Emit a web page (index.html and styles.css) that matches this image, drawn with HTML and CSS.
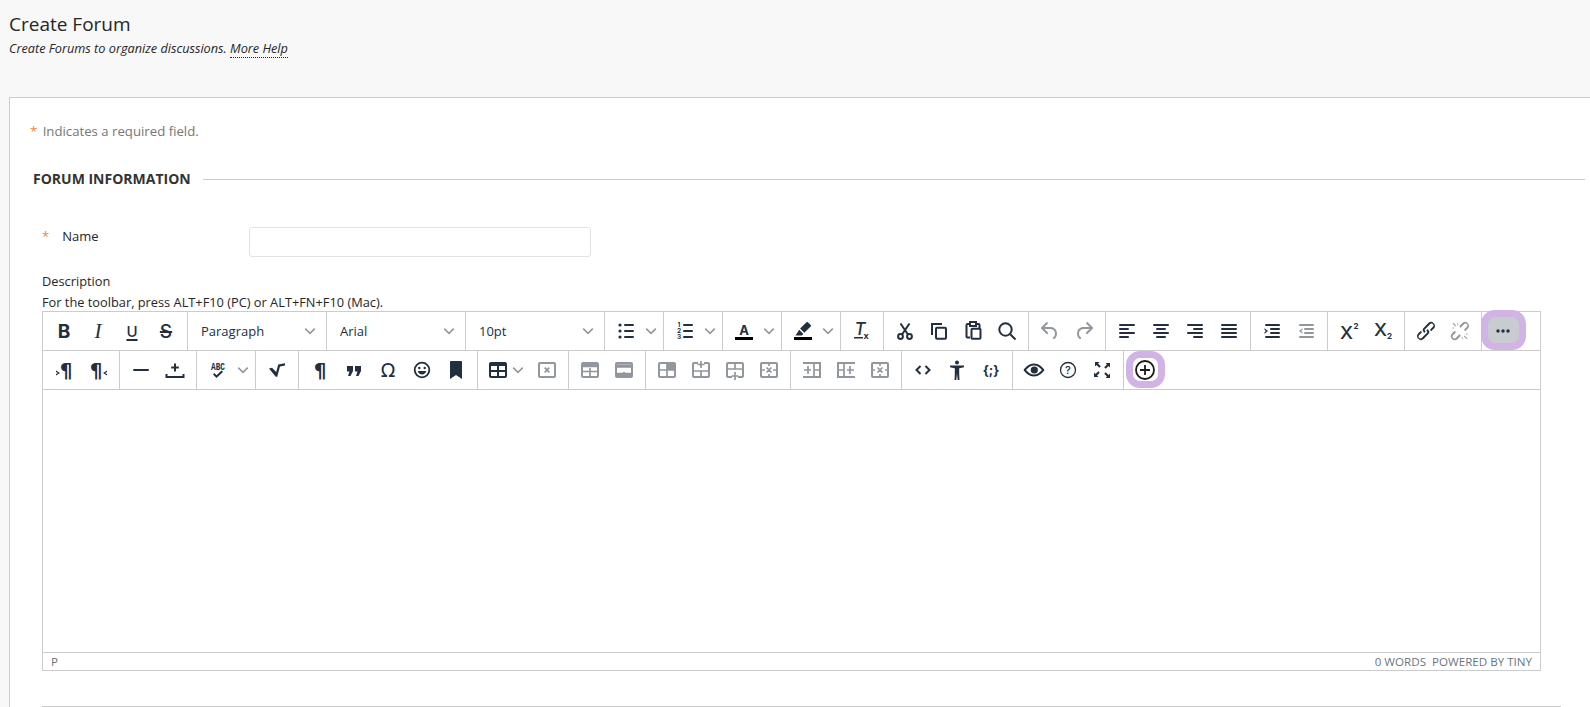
FILE: index.html
```html
<!DOCTYPE html>
<html lang="en">
  <head>
    <meta charset="UTF-8" />
    <title>Create Forum</title>
    <link rel="stylesheet" href="styles.css">
  </head>
  <body>
    <div class="page-header">
      <h1>Create Forum</h1>
      <p class="page-help">Create Forums to organize discussions. <a class="more-help">More Help</a></p>
    </div>

    <div class="panel">
      <p class="required-note"><span class="star star-note">*</span> Indicates a required field.</p>

      <div class="section-title">
        <h2>FORUM INFORMATION</h2>
        <div class="section-line"></div>
      </div>

      <div class="field-row">
        <div class="field-label"><span class="star">*</span><label>Name</label></div>
        <input class="text-input" type="text" />
      </div>

      <div class="desc-label">Description</div>
      <div class="desc-hint">For the toolbar, press ALT+F10 (PC) or ALT+FN+F10 (Mac).</div>

      <div class="editor">
        <div class="tb-row">
          <div class="tb-group">
            <button class="tbtn"><span class="g g-b">B</span></button>
            <button class="tbtn"><span class="g g-i">I</span></button>
            <button class="tbtn"><span class="g g-u">U</span></button>
            <button class="tbtn"><span class="g g-s">S</span></button>
          </div>
          <div class="tb-group"><button class="tsel"><span>Paragraph</span><svg class="chev" viewBox="0 0 10 10"><path d="M1 3l4 4 4-4"/></svg></button></div>
          <div class="tb-group"><button class="tsel"><span>Arial</span><svg class="chev" viewBox="0 0 10 10"><path d="M1 3l4 4 4-4"/></svg></button></div>
          <div class="tb-group"><button class="tsel"><span>10pt</span><svg class="chev" viewBox="0 0 10 10"><path d="M1 3l4 4 4-4"/></svg></button></div>
          <div class="tb-group">
            <button class="tbtn"><svg class="ico" viewBox="0 0 24 24"><rect x="10" y="5" width="10" height="2" rx="1"/><rect x="10" y="11" width="10" height="2" rx="1"/><rect x="10" y="17" width="10" height="2" rx="1"/><circle cx="6" cy="6" r="1.6"/><circle cx="6" cy="12" r="1.6"/><circle cx="6" cy="18" r="1.6"/></svg></button>
            <span class="tchev"><svg class="chev" viewBox="0 0 10 10"><path d="M1 3l4 4 4-4"/></svg></span>
          </div>
          <div class="tb-group">
            <button class="tbtn"><svg class="ico" viewBox="0 0 24 24"><rect x="10" y="5" width="10" height="2" rx="1"/><rect x="10" y="11" width="10" height="2" rx="1"/><rect x="10" y="17" width="10" height="2" rx="1"/><text class="nums" x="6" y="8">1</text><text class="nums" x="6" y="14">2</text><text class="nums" x="6" y="20">3</text></svg></button>
            <span class="tchev"><svg class="chev" viewBox="0 0 10 10"><path d="M1 3l4 4 4-4"/></svg></span>
          </div>
          <div class="tb-group">
            <button class="tbtn"><svg class="ico" viewBox="0 0 24 24"><text class="ltr-a" x="12" y="15.5">A</text><rect class="swatch" x="3" y="18" width="18" height="3"/></svg></button>
            <span class="tchev"><svg class="chev" viewBox="0 0 10 10"><path d="M1 3l4 4 4-4"/></svg></span>
          </div>
          <div class="tb-group">
            <button class="tbtn"><svg class="ico" viewBox="0 0 24 24"><path d="M16.9 3.3l2.8 2.8a1 1 0 0 1 0 1.4l-6.4 6.3-4.2-4.2 6.4-6.3a1 1 0 0 1 1.4 0zM8.2 10.7l4.2 4.2-1.500 1.600H4.500z"/><rect class="swatch" x="3" y="18" width="18" height="3"/></svg></button>
            <span class="tchev"><svg class="chev" viewBox="0 0 10 10"><path d="M1 3l4 4 4-4"/></svg></span>
          </div>
          <div class="tb-group">
            <button class="tbtn"><svg class="ico" viewBox="0 0 24 24"><text class="ltr-t" x="4.500" y="16">T</text><text class="ltr-x" x="16" y="19.500">x</text><rect x="4" y="18" width="9" height="1.500"/></svg></button>
          </div>
          <div class="tb-group">
            <button class="tbtn"><svg class="ico ln" viewBox="0 0 24 24"><circle cx="7.500" cy="17.500" r="2.400"/><circle cx="16.500" cy="17.500" r="2.400"/><path d="M9 15.500L16.500 4.500M15 15.500L7.500 4.500"/></svg></button>
            <button class="tbtn"><svg class="ico ln" viewBox="0 0 24 24"><path d="M5 16V5h10"/><rect x="9" y="8.700" width="10" height="11" rx="1"/></svg></button>
            <button class="tbtn"><svg class="ico ln" viewBox="0 0 24 24"><path d="M9 18.500H6.500a1 1 0 0 1-1-1V6a1 1 0 0 1 1-1H9M15 5h2.500a1 1 0 0 1 1 1v3"/><rect x="9" y="3" width="6" height="4"/><rect x="10.500" y="9.700" width="9" height="10" rx="1"/></svg></button>
            <button class="tbtn"><svg class="ico ln" viewBox="0 0 24 24"><circle cx="10.500" cy="10.500" r="6.200"/><path d="M15 15l5.500 5.500"/></svg></button>
          </div>
          <div class="tb-group">
            <button class="tbtn off"><svg class="ico" viewBox="0 0 24 24"><path d="M6.4 8H12c3.7 0 6.2 2 6.8 5.1.6 2.7-.4 5.6-2.3 6.8a1 1 0 0 1-1-1.8c1.1-.6 1.8-2.7 1.4-4.6-.5-2.1-2.1-3.5-4.9-3.5H6.4l3.3 3.3a1 1 0 1 1-1.4 1.4l-5-5a1 1 0 0 1 0-1.4l5-5a1 1 0 0 1 1.4 1.4L6.4 8z"/></svg></button>
            <button class="tbtn off"><svg class="ico flip" viewBox="0 0 24 24"><path d="M6.4 8H12c3.7 0 6.2 2 6.8 5.1.6 2.7-.4 5.6-2.3 6.8a1 1 0 0 1-1-1.8c1.1-.6 1.8-2.7 1.4-4.6-.5-2.1-2.1-3.5-4.9-3.5H6.4l3.3 3.3a1 1 0 1 1-1.4 1.4l-5-5a1 1 0 0 1 0-1.4l5-5a1 1 0 0 1 1.4 1.4L6.4 8z"/></svg></button>
          </div>
          <div class="tb-group">
            <button class="tbtn"><svg class="ico" viewBox="0 0 24 24"><rect x="4" y="5" width="16" height="2" rx="1"/><rect x="4" y="9" width="10" height="2" rx="1"/><rect x="4" y="13" width="16" height="2" rx="1"/><rect x="4" y="17" width="10" height="2" rx="1"/></svg></button>
            <button class="tbtn"><svg class="ico" viewBox="0 0 24 24"><rect x="4" y="5" width="16" height="2" rx="1"/><rect x="7" y="9" width="10" height="2" rx="1"/><rect x="4" y="13" width="16" height="2" rx="1"/><rect x="7" y="17" width="10" height="2" rx="1"/></svg></button>
            <button class="tbtn"><svg class="ico" viewBox="0 0 24 24"><rect x="4" y="5" width="16" height="2" rx="1"/><rect x="10" y="9" width="10" height="2" rx="1"/><rect x="4" y="13" width="16" height="2" rx="1"/><rect x="10" y="17" width="10" height="2" rx="1"/></svg></button>
            <button class="tbtn"><svg class="ico" viewBox="0 0 24 24"><rect x="4" y="5" width="16" height="2" rx="1"/><rect x="4" y="9" width="16" height="2" rx="1"/><rect x="4" y="13" width="16" height="2" rx="1"/><rect x="4" y="17" width="16" height="2" rx="1"/></svg></button>
          </div>
          <div class="tb-group">
            <button class="tbtn"><svg class="ico" viewBox="0 0 24 24"><rect x="5" y="5" width="15" height="2" rx="1"/><rect x="10" y="9" width="10" height="2" rx="1"/><rect x="10" y="13" width="10" height="2" rx="1"/><rect x="5" y="17" width="15" height="2" rx="1"/><path d="M4.500 9.200L8 12l-3.500 2.800V13.200L6 12 4.500 10.800z"/></svg></button>
            <button class="tbtn off"><svg class="ico" viewBox="0 0 24 24"><rect x="5" y="5" width="15" height="2" rx="1"/><rect x="10" y="9" width="10" height="2" rx="1"/><rect x="10" y="13" width="10" height="2" rx="1"/><rect x="5" y="17" width="15" height="2" rx="1"/><path d="M8.500 9.200L5 12l3.500 2.800V13.200L7 12l1.500-1.200z"/></svg></button>
          </div>
          <div class="tb-group">
            <button class="tbtn"><svg class="ico" viewBox="0 0 24 24"><text class="ltr-big" x="9.500" y="20" textLength="13" lengthAdjust="spacingAndGlyphs">X</text><text class="ltr-small" x="19" y="9.500">2</text></svg></button>
            <button class="tbtn"><svg class="ico" viewBox="0 0 24 24"><text class="ltr-big" x="9.500" y="16.500" textLength="13" lengthAdjust="spacingAndGlyphs">X</text><text class="ltr-small" x="18.500" y="20">2</text></svg></button>
          </div>
          <div class="tb-group">
            <button class="tbtn"><svg class="ico" viewBox="0 0 24 24"><path d="M6.2 12.3a1 1 0 0 1 1.4 1.4l-2 2a2 2 0 1 0 2.6 2.8l4.8-4.8a1 1 0 0 0 0-1.4 1 1 0 1 1 1.4-1.3 2.9 2.9 0 0 1 0 4L9.6 20a3.9 3.9 0 0 1-5.5-5.5l2-2zm11.6-.6a1 1 0 0 1-1.4-1.4l2-2a2 2 0 1 0-2.6-2.8L11 10.3a1 1 0 0 0 0 1.4 1 1 0 1 1-1.4 1.3 2.9 2.9 0 0 1 0-4L14.4 4a3.9 3.9 0 0 1 5.5 5.5l-2 2z"/></svg></button>
            <button class="tbtn off"><svg class="ico" viewBox="0 0 24 24"><path d="M6.2 12.3a1 1 0 0 1 1.4 1.4l-2 2a2 2 0 1 0 2.6 2.8l3.2-3.2 1.4 1.4-3.2 3.3a3.9 3.9 0 0 1-5.500-5.700l2-2zm11.600-.6a1 1 0 0 1-1.400-1.400l2-2a2 2 0 1 0-2.600-2.800l-3.200 3.200-1.400-1.400L14.400 4a3.900 3.900 0 0 1 5.500 5.500l-2 2z"/><path d="M3 9l3 .6.2-1zM9 3l.6 3 1-.2zM21 15l-3-.6-.2 1zM15 21l-.6-3-1 .2zM4.500 4.500l3 3 .7-.7-3-3zM19.500 19.500l-3-3-.7.7 3 3z"/></svg></button>
          </div>
          <div class="tb-group">
            <button class="tbtn btn-active ring-more"><svg class="ico" viewBox="0 0 24 24"><circle cx="7" cy="12" r="1.700"/><circle cx="12" cy="12" r="1.700"/><circle cx="17" cy="12" r="1.700"/></svg></button>
          </div>
        </div>

        <div class="tb-row">
          <div class="tb-group">
            <button class="tbtn"><svg class="ico" viewBox="0 0 24 24"><path d="M4 12.500L8 15l-4 2.500V16l2-1-2-1z"/><text class="pilcrow" x="14" y="19">¶</text></svg></button>
            <button class="tbtn"><svg class="ico" viewBox="0 0 24 24"><text class="pilcrow" x="10" y="19">¶</text><path d="M21 12.500L17 15l4 2.500V16l-2-1 2-1z"/></svg></button>
          </div>
          <div class="tb-group">
            <button class="tbtn"><svg class="ico" viewBox="0 0 24 24"><rect x="4" y="11" width="16" height="2" rx="1"/></svg></button>
            <button class="tbtn"><svg class="ico ln" viewBox="0 0 24 24"><path d="M12 5.500v8M8.200 9.500h7.600M3.500 16v3h17v-3"/></svg></button>
          </div>
          <div class="tb-group">
            <button class="tbtn"><svg class="ico" viewBox="0 0 24 24"><text class="ltr-abc" x="12" y="12" textLength="14" lengthAdjust="spacingAndGlyphs">ABC</text><path d="M7 16.500l1.400-1.400 2.100 2.100 5.100-4.700 1.400 1.400-6.500 6z"/></svg></button>
            <span class="tchev"><svg class="chev" viewBox="0 0 10 10"><path d="M1 3l4 4 4-4"/></svg></span>
          </div>
          <div class="tb-group">
            <button class="tbtn"><svg class="ico" viewBox="0 0 24 24"><path d="M4 10.500l3-.8 4.200 4.300 2-7.500 6.800-1.200v2.200l-5 .9-2.800 10.300h-1.500z"/></svg></button>
          </div>
          <div class="tb-group">
            <button class="tbtn"><svg class="ico" viewBox="0 0 24 24"><text class="pilcrow" x="12" y="19">¶</text></svg></button>
            <button class="tbtn"><svg class="ico" viewBox="0 0 24 24"><path d="M5 8h6v5l-2.500 5H6l1.500-4.500H5zM13 8h6v5l-2.500 5H14l1.500-4.500H13z"/></svg></button>
            <button class="tbtn"><span class="g g-omega">Ω</span></button>
            <button class="tbtn"><svg class="ico" viewBox="0 0 24 24"><circle class="ln-el" cx="12" cy="12" r="7.300"/><circle cx="9.300" cy="10" r="1.200"/><circle cx="14.700" cy="10" r="1.200"/><path d="M7.800 13h8.400c-.4 2.200-2 3.600-4.200 3.600S8.200 15.200 7.800 13z"/></svg></button>
            <button class="tbtn"><svg class="ico" viewBox="0 0 24 24"><path d="M6 4a1 1 0 0 1 1-1h10a1 1 0 0 1 1 1v17l-6-4-6 4z"/></svg></button>
          </div>
          <div class="tb-group">
            <button class="tbtn tbl-menu"><svg class="ico" viewBox="0 0 24 24"><path d="M19 4a2 2 0 0 1 2 2v12a2 2 0 0 1-2 2H5a2 2 0 0 1-2-2V6c0-1.100.9-2 2-2h14zM5 14v4h6v-4H5zm14 0h-6v4h6v-4zm0-6h-6v4h6V8zM5 12h6V8H5v4z"/></svg><svg class="chev" viewBox="0 0 10 10"><path d="M1 3l4 4 4-4"/></svg></button>
            <button class="tbtn off"><svg class="ico ln" viewBox="0 0 24 24"><rect x="4" y="5" width="16" height="14" rx="1"/><path class="thin" d="M9.700 9.700l4.600 4.600M14.300 9.700l-4.600 4.600"/></svg></button>
          </div>
          <div class="tb-group">
            <button class="tbtn off"><svg class="ico ln" viewBox="0 0 24 24"><rect x="4" y="5" width="16" height="14" rx="1"/><path class="thin" d="M12 10v9M4 13.500h16"/><path class="bar" d="M4 7.500h16"/></svg></button>
            <button class="tbtn off"><svg class="ico ln" viewBox="0 0 24 24"><rect x="4" y="5" width="16" height="14" rx="1"/><path class="bar" d="M4 8h16M4 16.500h16"/><path class="thin" d="M12 14v4"/></svg></button>
          </div>
          <div class="tb-group">
            <button class="tbtn off"><svg class="ico ln" viewBox="0 0 24 24"><rect x="4" y="5" width="16" height="14" rx="1"/><path class="thin" d="M12 5v14M4 12h16"/><rect class="fill-el" x="12" y="5" width="8" height="7"/></svg></button>
            <button class="tbtn off"><svg class="ico ln" viewBox="0 0 24 24"><path d="M9 5H5a1 1 0 0 0-1 1v12a1 1 0 0 0 1 1h14a1 1 0 0 0 1-1V6a1 1 0 0 0-1-1h-4"/><path class="thin" d="M4 13h16M12 13v6M12 3v7M8.500 6.500h7"/></svg></button>
            <button class="tbtn off"><svg class="ico ln" viewBox="0 0 24 24"><path d="M9 19H5a1 1 0 0 1-1-1V6a1 1 0 0 1 1-1h14a1 1 0 0 1 1 1v12a1 1 0 0 1-1 1h-4"/><path class="thin" d="M4 11h16M12 5v6M12 14v8M8.500 18h7"/></svg></button>
            <button class="tbtn off"><svg class="ico ln" viewBox="0 0 24 24"><path d="M9 5H5a1 1 0 0 0-1 1v12a1 1 0 0 0 1 1h14a1 1 0 0 0 1-1V6a1 1 0 0 0-1-1z"/><path class="thin" d="M9.500 9.500l5 5M14.500 9.500l-5 5M4 12h4M16 12h4M12 5v3M12 16v3"/></svg></button>
          </div>
          <div class="tb-group">
            <button class="tbtn off"><svg class="ico ln" viewBox="0 0 24 24"><path d="M4 6V5h16v14H4v-1"/><path class="thin" d="M14 5v14M14 12h6M8 8v8M4 12h7"/></svg></button>
            <button class="tbtn off"><svg class="ico ln" viewBox="0 0 24 24"><path d="M20 6V5H4v14h16v-1"/><path class="thin" d="M10 5v14M4 12h6M16 8v8M13 12h7"/></svg></button>
            <button class="tbtn off"><svg class="ico ln" viewBox="0 0 24 24"><rect x="4" y="5" width="16" height="14" rx="1"/><path class="thin" d="M9.500 9.500l5 5M14.500 9.500l-5 5M12 5v3M12 16v3M4 12h3M17 12h3"/></svg></button>
          </div>
          <div class="tb-group">
            <button class="tbtn"><svg class="ico ln" viewBox="0 0 24 24"><path d="M9.500 8l-4 4 4 4M14.500 8l4 4-4 4"/></svg></button>
            <button class="tbtn"><svg class="ico" viewBox="0 0 24 24"><circle cx="12" cy="4.500" r="2"/><path d="M5 7.500h14v1.800l-4.800 1V16l.3 6h-1.800L12 16h-.1l-.6 6H9.500l.3-6v-5.700L5 9.300z"/></svg></button>
            <button class="tbtn"><svg class="ico" viewBox="0 0 24 24"><text class="ltr-tpl" x="12" y="16.500">{;}</text></svg></button>
          </div>
          <div class="tb-group">
            <button class="tbtn"><svg class="ico" viewBox="0 0 24 24"><path d="M12 5.500c4.700 0 8.300 3.300 10.500 6.500-2.200 3.200-5.800 6.500-10.500 6.500S3.700 15.200 1.500 12C3.700 8.800 7.300 5.500 12 5.500zm0 2c-3.200 0-5.900 2-7.900 4.500 2 2.500 4.700 4.500 7.900 4.500s5.900-2 7.900-4.500c-2-2.500-4.700-4.500-7.900-4.500z"/><circle cx="12.300" cy="12" r="3.600"/></svg></button>
            <button class="tbtn"><svg class="ico" viewBox="0 0 24 24"><circle class="ln-thin" cx="12" cy="12" r="7.500"/><text class="ltr-q" x="12" y="16">?</text></svg></button>
            <button class="tbtn"><svg class="ico" viewBox="0 0 24 24"><path d="M4 4h5.500L8 5.500l2.800 2.800-1.500 1.500L6.500 7 5 8.500V4zM20 4v5.500L18.500 8l-2.800 2.800-1.500-1.500L17 6.500 15.500 5H20zM4 20v-5.500L5.500 16l2.800-2.800 1.500 1.500L7 17.500 8.500 19H4zM20 20h-4.500L17 18.500l-2.800-2.800 1.500-1.500 2.800 2.800 1.500-1.500V20z"/></svg></button>
          </div>
          <div class="tb-group">
            <button class="tbtn ring-plus"><svg class="ico plus-ico" viewBox="0 0 24 24"><circle cx="12" cy="12" r="9"/><path d="M12 7v10M7 12h10"/></svg></button>
          </div>
        </div>

        <div class="editor-body"></div>

        <div class="statusbar">
          <span class="status-path">P</span>
          <span class="status-right">0 WORDS&nbsp;&nbsp;POWERED BY TINY</span>
        </div>
      </div>

      <div class="bottom-line"></div>
    </div>
  </body>
</html>
```

FILE: styles.css
```css
html,
body {
  height: 707px;
  overflow: hidden;
}
body {
  font-family: "Open Sans", sans-serif;
  margin: 0;
  background-color: #f8f8f8;
  color: #262626;
}
.page-header {
  height: 97px;
  padding-left: 9px;
  box-sizing: border-box;
  padding-top: 12px;
}
.page-header h1 {
  margin: 0;
  font-size: 19px;
  font-weight: 400;
  line-height: 24px;
}
.page-help {
  margin: 3px 0 0;
  font-size: 12.7px;
  font-style: italic;
  line-height: 18px;
}
.more-help {
  border-bottom: 1px dotted #262626;
}
.panel {
  margin-left: 9px;
  height: 610px;
  background: white;
  border-top: 1px solid #ccc;
  border-left: 1px solid #ccc;
  box-sizing: border-box;
  padding-left: 20px;
}
.star {
  color: #f18a3c;
}
.star-note {
  margin-right: 2px;
}
.required-note {
  margin: 0;
  padding-top: 24px;
  font-size: 13.2px;
  line-height: 18px;
  color: #767676;
}
.section-title {
  display: flex;
  align-items: center;
  margin-top: 30px;
  padding-left: 3px;
  padding-right: 5px;
}
.section-title h2 {
  margin: 0;
  font-size: 14px;
  font-weight: 700;
  line-height: 18px;
  color: #333;
}
.section-line {
  flex: 1;
  height: 1px;
  background: #ccc;
  margin-left: 12px;
}
.field-row {
  display: flex;
  margin-top: 39px;
  padding-left: 12px;
}
.field-label {
  width: 207px;
  font-size: 13px;
  line-height: 18px;
  display: flex;
  gap: 13px;
}
.text-input {
  width: 342px;
  height: 30px;
  box-sizing: border-box;
  border: 1px solid #e2e2e2;
  border-radius: 3px;
  background: white;
  padding: 0;
}
.desc-label,
.desc-hint {
  font-size: 12.8px;
  line-height: 18px;
  padding-left: 12px;
}
.desc-label {
  margin-top: 15px;
}
.desc-hint {
  margin-top: 3px;
}
.editor {
  margin: 0 0 0 12px;
  width: 1499px;
  height: 360px;
  box-sizing: border-box;
  border: 1px solid #ccc;
  display: flex;
  flex-direction: column;
  background: white;
}
.tb-row {
  display: flex;
  height: 39px;
  box-sizing: border-box;
  border-bottom: 1px solid #ccc;
  flex: none;
}
.tb-group {
  display: flex;
  padding: 0 4px;
  border-right: 1px solid #ccc;
  position: relative;
}
.tb-group:last-child {
  border-right: none;
}
.tbtn {
  position: relative;
  width: 34px;
  height: 34px;
  margin: 2px 0;
  padding: 0;
  border: none;
  background: none;
  border-radius: 3px;
  color: #222f3e;
  display: flex;
  align-items: center;
  justify-content: center;
  font-family: inherit;
}
.tbtn.off {
  color: #92979e;
}
.tsel {
  width: 130px;
  height: 34px;
  margin: 2px 0;
  padding: 0 6px 0 9px;
  border: none;
  background: none;
  display: flex;
  align-items: center;
  justify-content: space-between;
  font-family: "Open Sans", sans-serif;
  font-size: 13px;
  color: #222f3e;
}
.tchev {
  width: 16px;
  display: flex;
  align-items: center;
  justify-content: center;
}
.chev {
  width: 12px;
  height: 12px;
  fill: none;
  stroke: #92979e;
  stroke-width: 1.3;
  flex: none;
}
.tbl-menu {
  width: 48px;
  justify-content: flex-start;
  padding-left: 4px;
}
.tbl-menu .chev {
  margin-left: 2px;
}
.ico {
  width: 24px;
  height: 24px;
  fill: currentColor;
  flex: none;
}
.ico.flip {
  transform: scaleX(-1);
}
.ico.ln {
  fill: none;
  stroke: currentColor;
  stroke-width: 2;
}
.ico.ln .thin {
  stroke-width: 1.7;
}
.ico.ln .bar {
  stroke-width: 3.5;
}
.ico.ln .fill-el {
  fill: currentColor;
  stroke: none;
}
.ln-el {
  fill: none;
  stroke: currentColor;
  stroke-width: 1.8;
}
.ln-thin {
  fill: none;
  stroke: currentColor;
  stroke-width: 1.3;
}
.swatch {
  fill: #000;
}
.g {
  line-height: 1;
  display: block;
}
.g-b {
  font-family: Inter, sans-serif;
  font-weight: 700;
  font-size: 19px;
}
.g-i {
  font-family: "Liberation Serif", serif;
  font-style: italic;
  font-size: 21px;
}
.g-u {
  font-family: Inter, sans-serif;
  font-weight: 500;
  font-size: 15px;
  text-decoration: underline;
  text-decoration-thickness: 2px;
  text-underline-offset: 2px;
}
.g-s {
  font-family: Inter, sans-serif;
  font-weight: 500;
  font-size: 19px;
  text-decoration: line-through;
  text-decoration-thickness: 2px;
}
.g-omega {
  font-family: "DejaVu Sans", sans-serif;
  font-size: 19px;
}
svg text {
  font-family: Inter, sans-serif;
  text-anchor: middle;
}
.nums {
  font-size: 6.5px;
  font-weight: 700;
}
.ltr-a {
  font-size: 13px;
  font-weight: 700;
}
svg .ltr-t {
  font-size: 17px;
  font-style: italic;
  font-weight: 500;
  text-anchor: start;
}
.ltr-x {
  font-size: 9px;
  font-weight: 700;
}
.ltr-big {
  font-size: 17px;
  font-weight: 500;
}
.ltr-small {
  font-size: 8px;
  font-weight: 700;
}
svg .ltr-abc {
  font-size: 11px;
  font-family: "Liberation Mono", monospace;
  font-weight: 700;
}
.ltr-tpl {
  font-size: 13px;
  font-weight: 700;
}
.ltr-q {
  font-size: 11px;
  font-weight: 500;
}
svg .pilcrow {
  font-family: "DejaVu Sans", sans-serif;
  font-size: 20px;
  font-weight: 700;
}
.btn-active {
  background: #c8cbcf;
}
.ring-more::after,
.ring-plus::after {
  content: "";
  position: absolute;
  box-sizing: border-box;
  border: 7px solid #d1b3e5;
  border-radius: 14px;
}
.ring-more::after {
  left: -5px;
  top: -4px;
  width: 45px;
  height: 40px;
}
.ring-plus::after {
  left: -2px;
  top: -2px;
  width: 39px;
  height: 37px;
}
.plus-ico {
  fill: none;
  stroke: #1a1a1a;
  stroke-width: 1.8;
}
.editor-body {
  flex: 1;
}
.statusbar {
  flex: none;
  height: 18px;
  box-sizing: border-box;
  border-top: 1px solid #ccc;
  display: flex;
  justify-content: space-between;
  align-items: center;
  padding: 0 8px;
  font-size: 11.6px;
  color: rgba(34, 47, 62, 0.7);
}
.bottom-line {
  height: 1px;
  background: #ccc;
  margin: 35px 29px 0 12px;
}
```
